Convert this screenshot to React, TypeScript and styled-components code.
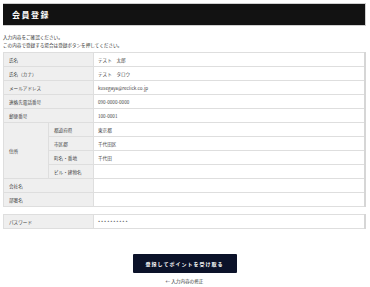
import React from "react";
import styled, { createGlobalStyle } from "styled-components";

const Global = createGlobalStyle`
  html, body { margin: 0; padding: 0; background: #ffffff; }
  body { font-family: "Noto Sans CJK JP", "Noto Sans", sans-serif; color: #333333; }
`;

const Page = styled.div`
  width: 370px;
  box-sizing: border-box;
  padding: 3px 4px 0 3px;
  display: flex;
  flex-direction: column;
`;

const Header = styled.div`
  height: 23px;
  background: #121212;
  border: 1px solid #cfcfcf;
  border-left: none;
  box-sizing: border-box;
  display: flex;
  align-items: center;
  padding-left: 9px;
`;

const Title = styled.h1`
  margin: 0;
  font-size: 8px;
  font-weight: 700;
  letter-spacing: 1.5px;
  color: #ffffff;
  line-height: 1;
`;

const Intro = styled.p`
  margin: 8px 0 0 0;
  font-size: 4.6px;
  line-height: 7.6px;
  color: #333333;
`;

const Table = styled.table<{ $gap: number }>`
  width: 100%;
  border-collapse: collapse;
  margin-top: ${(p) => p.$gap}px;
  table-layout: fixed;
  font-size: 4.6px;
`;

const Row = styled.tr`
  height: 14px;
`;

const Label = styled.th`
  background: #efefef;
  border: 1px solid #dedede;
  padding: 0 5px;
  text-align: left;
  font-weight: 400;
  color: #444444;
  vertical-align: middle;
  white-space: nowrap;
`;

const Value = styled.td`
  background: #ffffff;
  border: 1px solid #dedede;
  border-right: 2px solid #d6d6d6;
  padding: 0 4px;
  color: #444444;
  vertical-align: middle;
  white-space: nowrap;
`;

const Masked = styled.span`
  letter-spacing: 0.9px;
`;

const Actions = styled.div`
  display: flex;
  flex-direction: column;
  align-items: center;
  margin-top: 25px;
`;

const SubmitButton = styled.button`
  width: 104px;
  height: 19px;
  background: #0b1229;
  border: none;
  border-radius: 1px;
  color: #ffffff;
  font-family: "Noto Sans CJK JP", sans-serif;
  font-size: 5px;
  font-weight: 700;
  letter-spacing: 1px;
  padding: 0;
  cursor: pointer;
`;

const BackLink = styled.a`
  margin-top: 5px;
  font-size: 4.6px;
  color: #333333;
  text-decoration: underline;
`;

const rows: [string, string][] = [
  ["氏名", "テスト　太郎"],
  ["氏名（カナ）", "テスト　タロウ"],
  ["メールアドレス", "kusegaya@reclick.co.jp"],
  ["連絡先電話番号", "090-0000-0000"],
  ["郵便番号", "100-0001"],
];

const address: [string, string][] = [
  ["都道府県", "東京都"],
  ["市区郡", "千代田区"],
  ["町名・番地", "千代田"],
  ["ビル・建物名", ""],
];

export default function App() {
  return (
    <>
      <Global />
      <Page>
        <Header>
          <Title>会員登録</Title>
        </Header>
        <Intro>
          入力内容をご確認ください。
          <br />
          この内容で登録する場合は登録ボタンを押してください。
        </Intro>
        <Table $gap={3}>
          <colgroup>
            <col style={{ width: 45 }} />
            <col style={{ width: 45 }} />
            <col />
          </colgroup>
          <tbody>
            {rows.map(([k, v]) => (
              <Row key={k}>
                <Label colSpan={2}>{k}</Label>
                <Value>{v}</Value>
              </Row>
            ))}
            {address.map(([k, v], i) => (
              <Row key={k}>
                {i === 0 && <Label rowSpan={4}>住所</Label>}
                <Label>{k}</Label>
                <Value>{v}</Value>
              </Row>
            ))}
            <Row>
              <Label colSpan={2}>会社名</Label>
              <Value />
            </Row>
            <Row>
              <Label colSpan={2}>部署名</Label>
              <Value />
            </Row>
          </tbody>
        </Table>
        <Table $gap={7}>
          <colgroup>
            <col style={{ width: 90 }} />
            <col />
          </colgroup>
          <tbody>
            <Row>
              <Label>パスワード</Label>
              <Value>
                <Masked>**********</Masked>
              </Value>
            </Row>
          </tbody>
        </Table>
        <Actions>
          <SubmitButton>登録してポイントを受け取る</SubmitButton>
          <BackLink href="#">← 入力内容の修正</BackLink>
        </Actions>
      </Page>
    </>
  );
}
